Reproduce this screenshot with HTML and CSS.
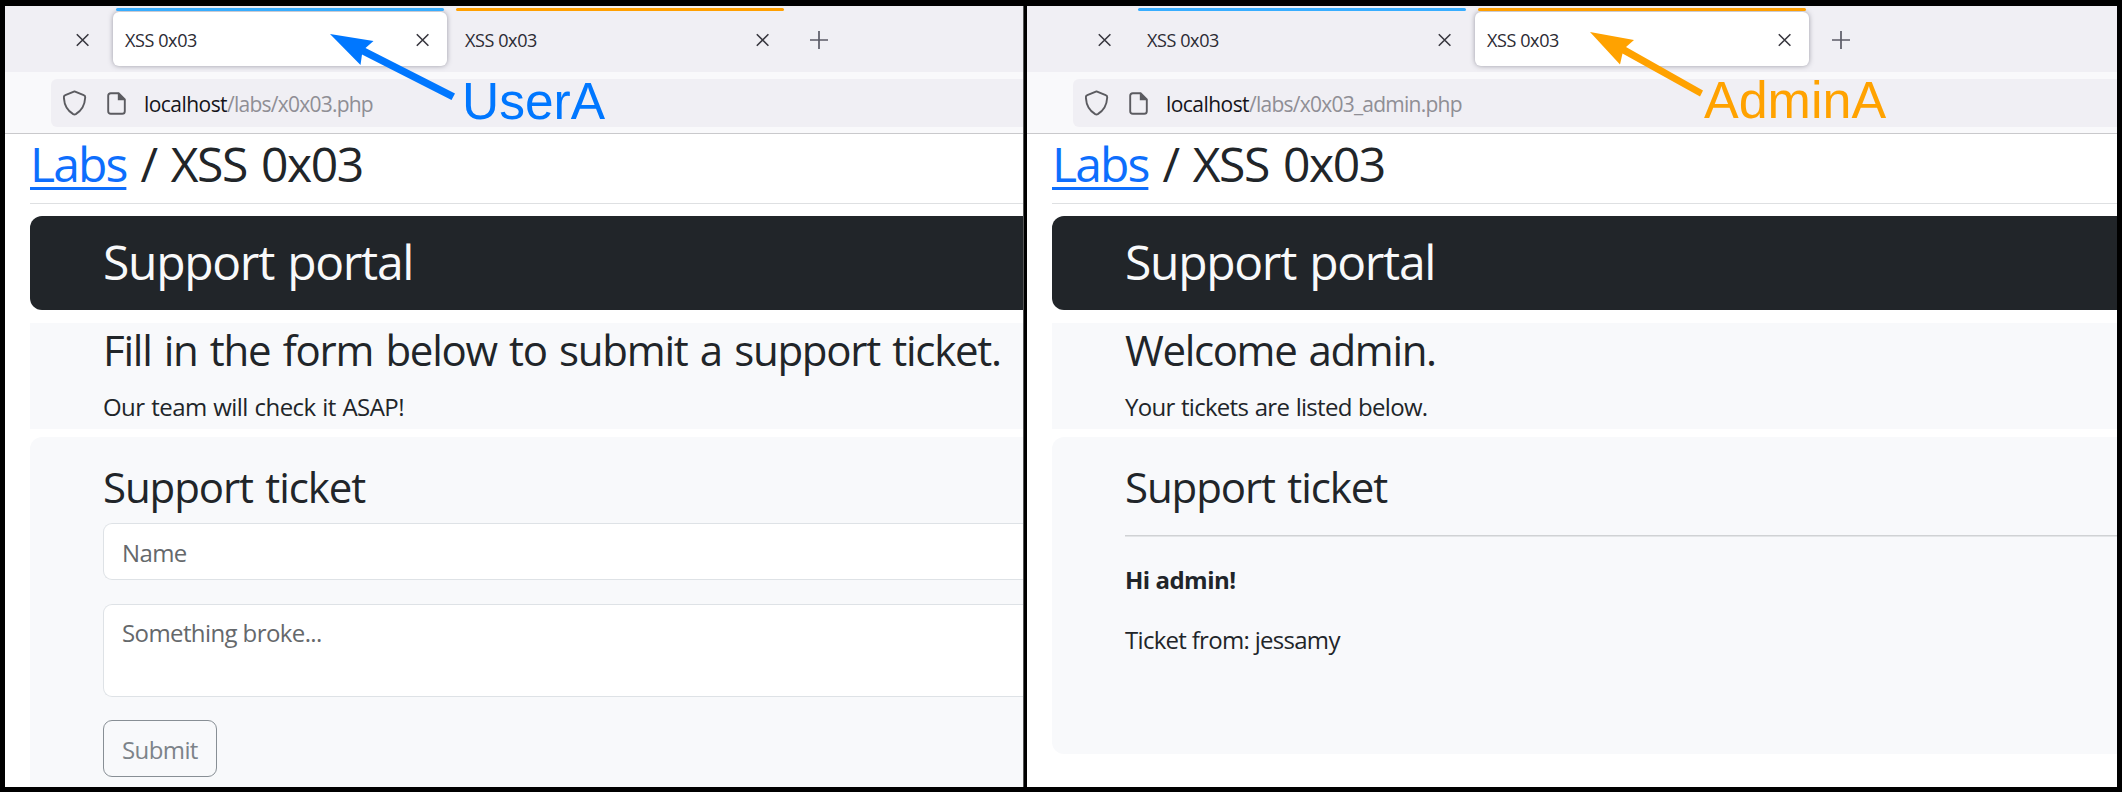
FILE: index.html
```html
<!DOCTYPE html>
<html lang="en">
<head>
<meta charset="utf-8">
<title>XSS 0x03</title>
<link rel="stylesheet" href="styles.css">
</head>
<body>
<svg class="defs" width="0" height="0">
  <symbol id="close" viewBox="0 0 14 14"><path d="M.8 1.2 12.4 12.8M12.4 1.2 .8 12.8" fill="none" stroke="#38373f" stroke-width="1.6"/></symbol>
  <symbol id="plus" viewBox="0 0 18 18"><path d="M9 0V18M0 9H18" fill="none" stroke="#5b5b66" stroke-width="1.7"/></symbol>
  <symbol id="shield" viewBox="0 0 24 26"><path d="M11.5 1.4 20.7 5.2C21.8 5.6 22.3 6.3 22.2 7.5 21.8 15 19 20.4 12.8 24.1 11.9 24.6 11.1 24.6 10.2 24.1 4 20.4 1.2 15 .9 7.5 .8 6.3 1.2 5.6 2.3 5.2Z" fill="none" stroke="#5b5b60" stroke-width="1.9" stroke-linejoin="round"/></symbol>
  <symbol id="doc" viewBox="0 0 19 23"><path d="M3.8 1.2H11.6L17.8 7.4V19.2Q17.8 21.8 15.2 21.8H3.8Q1.2 21.8 1.2 19.2V3.8Q1.2 1.2 3.8 1.2Z" fill="none" stroke="#5b5b60" stroke-width="1.9"/><path d="M10.8 1V8.2H18.2Z" fill="#5b5b60"/></symbol>
</svg>
<main class="shot">
  <section class="window window-user">
    <div class="tabs">
      <div class="tab tab-cut"><svg class="x"><use href="#close"/></svg></div>
      <div class="tab active blue"><span class="tab-title">XSS 0x03</span><svg class="x"><use href="#close"/></svg></div>
      <div class="tab orange"><span class="tab-title">XSS 0x03</span><svg class="x"><use href="#close"/></svg></div>
      <svg class="plus"><use href="#plus"/></svg>
    </div>
    <div class="toolbar">
      <div class="url">
        <svg class="shield"><use href="#shield"/></svg>
        <svg class="doc"><use href="#doc"/></svg>
        <span class="address"><b>localhost</b><span>/labs/x0x03.php</span></span>
      </div>
    </div>
    <div class="page">
      <h1 class="crumb"><a href="#">Labs</a><span> / XSS 0x03</span></h1>
      <header class="banner"><span>Support portal</span></header>
      <div class="intro">
        <h2 class="fill"><span>Fill in the form below to submit a support ticket.</span></h2>
        <p class="our"><span>Our team will check it ASAP!</span></p>
      </div>
      <div class="card">
        <h2 class="ticket"><span>Support ticket</span></h2>
        <div class="field"><span>Name</span></div>
        <div class="field area"><span>Something broke...</span></div>
        <button class="submit"><span>Submit</span></button>
      </div>
    </div>
    <svg class="arrow arrow-user" viewBox="0 0 130 72"><path d="M2 2 45.5 9 37.5 16 127 61.5 123.5 68 34 22.5 32.5 33Z" fill="#0077ff"/></svg>
    <span class="label label-user">UserA</span>
  </section>
  <section class="window window-admin">
    <div class="tabs">
      <div class="tab tab-cut"><svg class="x"><use href="#close"/></svg></div>
      <div class="tab blue"><span class="tab-title">XSS 0x03</span><svg class="x"><use href="#close"/></svg></div>
      <div class="tab active orange"><span class="tab-title">XSS 0x03</span><svg class="x"><use href="#close"/></svg></div>
      <svg class="plus"><use href="#plus"/></svg>
    </div>
    <div class="toolbar">
      <div class="url">
        <svg class="shield"><use href="#shield"/></svg>
        <svg class="doc"><use href="#doc"/></svg>
        <span class="address"><b>localhost</b><span>/labs/x0x03_admin.php</span></span>
      </div>
    </div>
    <div class="page">
      <h1 class="crumb"><a href="#">Labs</a><span> / XSS 0x03</span></h1>
      <header class="banner"><span>Support portal</span></header>
      <div class="intro">
        <h2 class="welcome"><span>Welcome admin.</span></h2>
        <p class="your"><span>Your tickets are listed below.</span></p>
      </div>
      <div class="card card-list">
        <h2 class="ticket"><span>Support ticket</span></h2>
        <div class="rule"></div>
        <p class="hi"><span>Hi admin!</span></p>
        <p class="from"><span>Ticket from: jessamy</span></p>
      </div>
    </div>
    <svg class="arrow arrow-admin" viewBox="0 0 118 70"><path d="M2 2 46 10 38 17 115 60.5 112 66.5 34.5 23.5 32 34.5Z" fill="#ffa200"/></svg>
    <span class="label label-admin">AdminA</span>
  </section>
</main>
</body>
</html>
```
FILE: styles.css
```css
* { box-sizing: border-box; margin: 0; }
body { width: 2122px; height: 792px; overflow: hidden; background: #000; font-family: "Open Sans", "Noto Sans", sans-serif; color: #212529; }
.defs { position: absolute; }
.shot { display: flex; gap: 3px; height: 792px; padding: 6px 5px 5px; }
.window { position: relative; height: 781px; overflow: hidden; background: #fff; }
.window-user { width: 1019px; border-right: 1px solid #555; }
.window-admin { width: 1090px; }

.tabs { display: flex; height: 66px; padding: 2px 0 0 0; background: #f0eff4; }
.tab { position: relative; display: flex; align-items: center; justify-content: space-between; width: 334px; height: 62px; margin-right: 6px; padding: 1px 17px 0 12px; font-size: 18px; color: #2b2a33; }
.tab-cut { width: 102px; justify-content: flex-end; }
.tab-title { letter-spacing: -0.4px; }
.tab.active::before { content: ""; position: absolute; inset: 4px 0 4px 0; border-radius: 6px; background: #fff; box-shadow: 0 0 5px rgba(70, 70, 85, .5); }
.tab.blue::after, .tab.orange::after { content: ""; position: absolute; top: 0; left: 3px; right: 3px; height: 3px; border-radius: 2px; }
.tab.blue::after { background: #37adff; }
.tab.orange::after { background: #ff9f00; }
.tab > * { position: relative; }
.x { width: 14px; height: 14px; }
.plus { width: 18px; height: 18px; margin: 23px 0 0 17px; }

.toolbar { height: 62px; padding: 7px 0 6px 46px; background: #f9f9fb; border-bottom: 1px solid #c9c9cc; }
.url { display: flex; align-items: center; height: 48px; padding-left: 12px; border-radius: 6px 0 0 6px; background: #f0eff4; }
.shield { width: 24px; height: 26px; }
.doc { width: 19px; height: 23px; margin-left: 20px; }
.address { margin-left: 18px; padding-top: 2px; font-size: 21px; line-height: 30px; letter-spacing: -0.76px; white-space: nowrap; color: #8f8e95; }
.address b { font-weight: 400; letter-spacing: -0.55px; color: #15141a; }

.page { padding-left: 25px; white-space: nowrap; }
h1, h2 { font-weight: 400; }
.crumb { height: 70px; padding-top: 1px; border-bottom: 1px solid #dee0e2; font-size: 48px; line-height: 58px; letter-spacing: -1.4px; word-spacing: 3px; white-space: pre; }
.crumb a { letter-spacing: -1.9px; color: #0d6efd; text-decoration-thickness: 3px; text-underline-offset: 5px; }
.banner { height: 94px; margin-top: 12px; padding: 17px 0 0 73px; border-radius: 12px 0 0 12px; background: #212529; color: #f8f9fa; font-size: 48px; line-height: 58px; letter-spacing: -1.3px; word-spacing: 2px; }
.intro { height: 106px; margin-top: 13px; padding: 2px 0 0 73px; background: #f8f9fb; }
h2 { font-size: 42px; line-height: 50px; }
.fill { letter-spacing: -1.25px; word-spacing: 2.6px; }
.welcome { letter-spacing: -1.35px; word-spacing: 2.6px; }
.ticket { letter-spacing: -1.1px; word-spacing: 2.6px; }
p { font-size: 24px; line-height: 36px; }
.intro p { margin-top: 14px; }
.our { letter-spacing: -0.55px; word-spacing: 1px; }
.your { letter-spacing: -0.72px; word-spacing: 1px; }
.card { height: 400px; margin-top: 8px; padding: 25px 0 0 73px; border-radius: 12px 0 0 12px; background: #f8f9fb; }
.card-list { height: 317px; }
.field, .submit { display: block; height: 57px; padding: 11px 19px 9px 18px; border: 1px solid #dee2e6; border-radius: 9px; background: #fff; color: #65686b; font: 24px/36px "Open Sans", "Noto Sans", sans-serif; letter-spacing: -0.6px; }
.field { margin-top: 11px; border-right: 0; border-radius: 9px 0 0 9px; }
.area { height: 93px; margin-top: 24px; padding-top: 10px; }
.submit { width: 114px; margin-top: 23px; border-color: #888f95; background: none; color: #7c8389; text-align: left; }
.rule { height: 2px; margin-top: 23px; background: #d0d2d4; border-bottom: 1px solid #e3e5e7; }
.hi { margin-top: 25px; font-weight: 700; letter-spacing: -0.5px; }
.from { margin-top: 24px; letter-spacing: -0.7px; }

.arrow { position: absolute; }
.arrow-user { left: 323px; top: 26px; width: 130px; height: 72px; }
.arrow-admin { left: 561px; top: 24px; width: 118px; height: 70px; }
.label { position: absolute; font: 51px/58px "Liberation Sans", Arial, sans-serif; }
.label-user { left: 457px; top: 66px; font-size: 51.5px; color: #0077ff; }
.label-admin { left: 677px; top: 65px; font-size: 52px; color: #ffa200; }
```
